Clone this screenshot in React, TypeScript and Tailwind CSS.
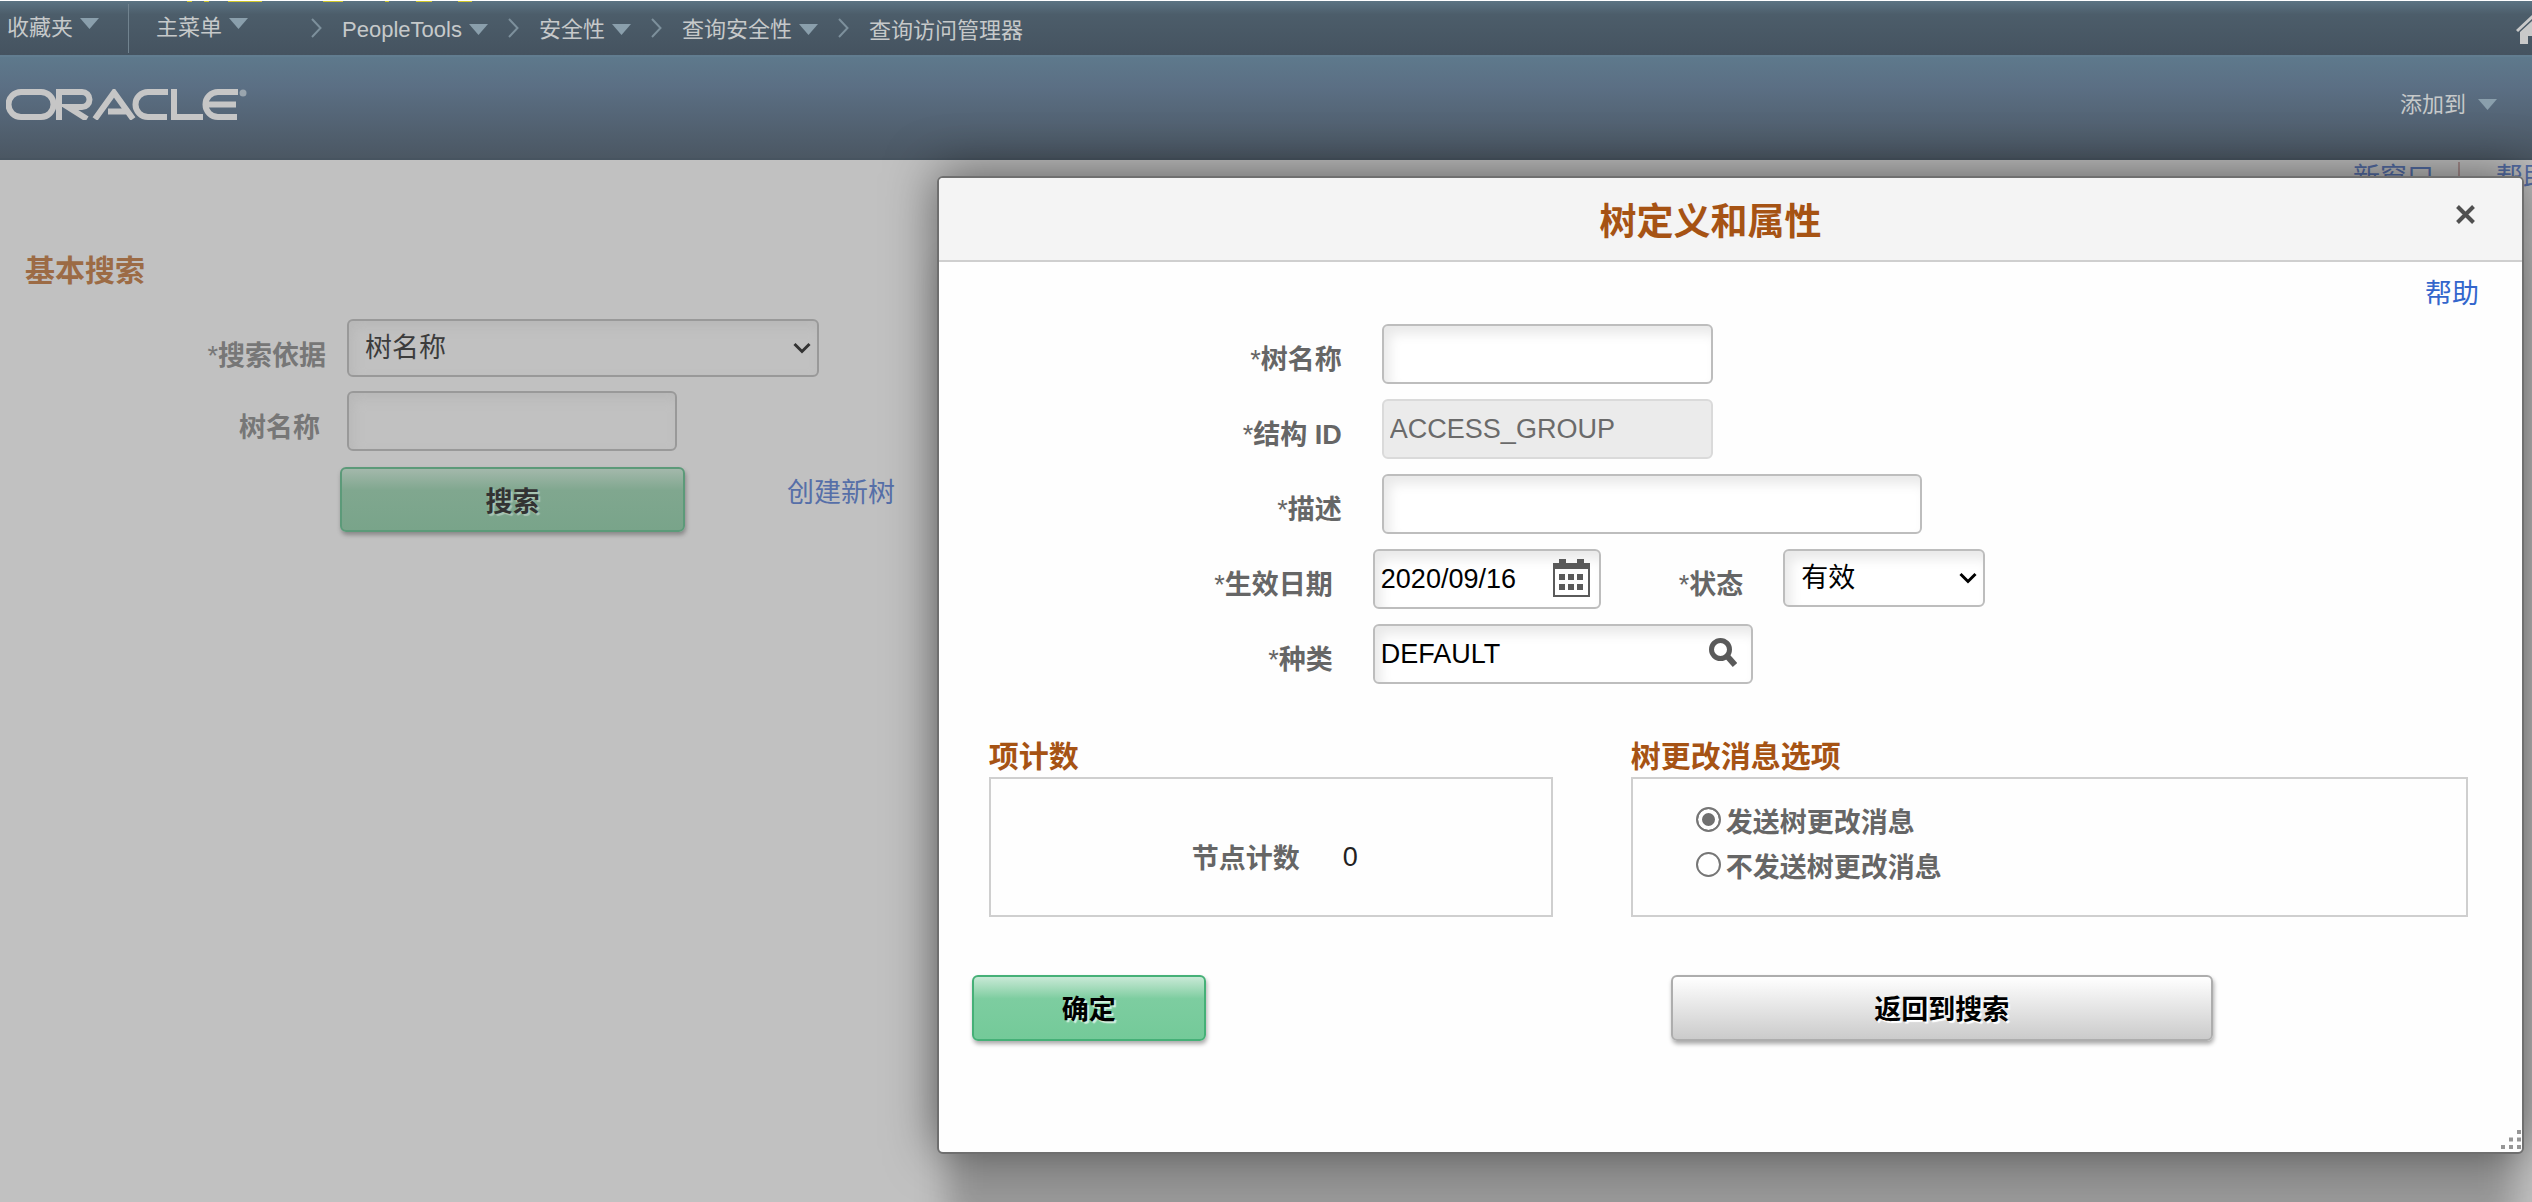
import type { ReactNode } from "react";

const FIELD =
  "h-[60px] rounded-md border-2 border-[#bdbdbd] bg-white px-1.5 text-[27px] text-black shadow-[inset_6px_8px_12px_#e9e9e9] outline-none";

function Caret() {
  return (
    <svg width="19" height="11" viewBox="0 0 19 11" fill="#8a9fac" aria-hidden="true">
      <path d="M0 0H19L9.500 11Z" />
    </svg>
  );
}

function Separator() {
  return (
    <svg width="11" height="20" viewBox="0 0 11 20" fill="none" stroke="#7d909c" strokeWidth="2" aria-hidden="true">
      <path d="M1 1L9.500 10L1 19" />
    </svg>
  );
}

function Crumb({ children }: { children: ReactNode }) {
  return (
    <button type="button" className="flex items-center gap-[7px] pt-1 pb-0.5">
      <span>{children}</span>
      <Caret />
    </button>
  );
}

function Logo() {
  return (
    <svg width="242" height="31" viewBox="0 0 242 31" fill="none" stroke="#c6c6c6" strokeWidth="6" role="img" aria-label="ORACLE">
      <path d="M15 3H35A12.500 12.500 0 0 1 35 28H15A12.500 12.500 0 0 1 15 3Z" />
      <path d="M53 31V3H76A7.500 7.500 0 0 1 76 18H62L81 30" />
      <path d="M89 30L108 3.500L127 30M102 22.500H120" />
      <path d="M162 3H142A12.500 12.500 0 0 0 142 28H161" />
      <path d="M168 0V28H197" />
      <path d="M232 3H212A12.500 12.500 0 0 0 212 28H231M202 15.500H230" />
      <circle cx="237" cy="4" r="3.500" fill="#9aa5ae" stroke="none" />
    </svg>
  );
}

function HomeIcon() {
  return (
    <svg width="32" height="30" viewBox="0 0 32 30" fill="#c9c9c9" aria-hidden="true">
      <path d="M16 0L0 15L2 17L16 4L30 17L32 15Z" />
      <path d="M16 6L4 17V29H12V21H20V29H28V17Z" />
    </svg>
  );
}

function CalendarIcon() {
  return (
    <svg width="38" height="40" viewBox="0 0 38 40" fill="#5a5a5a" aria-hidden="true">
      <path d="M6 0H13V4H24V0H31V4H37V38H0V4H6ZM2 10V36H35V10Z" fillRule="evenodd" />
      <path d="M6 15H12V21H6ZM15 15H21V21H15ZM24 15H30V21H24ZM6 25H12V31H6ZM15 25H21V31H15ZM24 25H30V31H24Z" />
    </svg>
  );
}

function SearchIcon() {
  return (
    <svg width="28" height="29" viewBox="0 0 28 29" fill="none" stroke="#5a5a5a" aria-hidden="true">
      <circle cx="11.500" cy="11.500" r="9" strokeWidth="5" />
      <path d="M18 18L26 27" strokeWidth="6" />
    </svg>
  );
}

function SelectArrow({ color }: { color: string }) {
  return (
    <svg
      className="pointer-events-none absolute top-1/2 right-2 -translate-y-1/2"
      width="18"
      height="12"
      viewBox="0 0 18 12"
      fill="none"
      stroke={color}
      strokeWidth="3"
      aria-hidden="true"
    >
      <path d="M1.500 2L9 9.500L16.500 2" />
    </svg>
  );
}

function FormLabel({ id, narrow, children }: { id: string; narrow?: boolean; children: ReactNode }) {
  return (
    <label
      htmlFor={id}
      className={`shrink-0 pt-3 text-right font-bold text-[#666] ${narrow ? "w-[394px]" : "w-[403px]"}`}
    >
      <span className="font-normal">*</span>
      {children}
    </label>
  );
}

function TopBar() {
  return (
    <nav className="relative flex h-[55px] items-center border-t border-white bg-linear-to-b from-[#5c7483] via-[#4c5d6a] via-25% to-[#455360] pl-[7px] text-[22px] text-[#c6c9ca]">
      <svg className="absolute top-0 left-0" width="500" height="1" viewBox="0 0 500 1" fill="#cfc62a" aria-hidden="true">
        <path d="M187 0h5v1h-5zM204 0h5v1h-5zM228 0h34v1h-34zM323 0h20v1h-20zM385 0h4v1h-4zM416 0h16v1h-16zM458 0h14v1h-14z" />
      </svg>
      <button type="button" className="flex items-center gap-[7px] pb-0.5">
        <span>收藏夹</span>
        <span className="pb-2"><Caret /></span>
      </button>
      <span className="ml-[29px] h-[49px] w-px bg-[#71838f]" />
      <button type="button" className="ml-[27px] flex items-center gap-[7px] pb-0.5">
        <span>主菜单</span>
        <span className="pb-2"><Caret /></span>
      </button>
      <div className="ml-[63px] flex items-center gap-5">
        <Separator />
        <Crumb>PeopleTools</Crumb>
        <Separator />
        <Crumb>安全性</Crumb>
        <Separator />
        <Crumb>查询安全性</Crumb>
        <Separator />
        <span className="pt-1">查询访问管理器</span>
      </div>
      <a href="#home" aria-label="主页" className="-mr-4 ml-auto pt-1">
        <HomeIcon />
      </a>
    </nav>
  );
}

function SearchPanel() {
  return (
    <main className="pl-[25px] text-[27px] leading-10">
      <h1 className="mt-[60px] text-[30px] font-bold text-[#9c6b45]">基本搜索</h1>
      <div className="mt-7 flex items-center">
        <label htmlFor="searchBy" className="w-[301px] pt-4 text-right font-bold text-[#777]">
          <span className="font-normal">*</span>搜索依据
        </label>
        <div className="relative ml-[21px] w-[472px]">
          <select
            id="searchBy"
            className="h-[58px] w-full appearance-none rounded-md border-2 border-[#999] bg-[#c1c1c1] px-4 text-[#3c3c3c] shadow-[inset_4px_6px_12px_#b8b8b8] outline-none"
          >
            <option>树名称</option>
          </select>
          <SelectArrow color="#333" />
        </div>
      </div>
      <div className="mt-3.5 flex items-center">
        <label htmlFor="searchTree" className="w-[295px] pt-3.5 text-right font-bold text-[#777]">
          树名称
        </label>
        <input
          id="searchTree"
          className="ml-[27px] h-[60px] w-[330px] rounded-md border-2 border-[#999] bg-[#c1c1c1] px-1.5 shadow-[inset_4px_6px_12px_#b8b8b8] outline-none"
        />
      </div>
      <div className="mt-4 ml-[315px] flex items-start">
        <button
          type="button"
          className="h-[65px] w-[345px] rounded-md border-2 border-[#5c9a79] bg-linear-to-b from-[#a3b8ab] via-[#80a78f] via-35% to-[#79a48a] pt-1 font-bold text-[#333] shadow-[1px_3px_4px_#888] text-shadow-[2px_2px_1px_#a9c4b4]"
        >
          搜索
        </button>
        <a href="#create" className="mt-1.5 ml-[102px] text-[#566fa8]">
          创建新树
        </a>
      </div>
    </main>
  );
}

function TreeDialog() {
  return (
    <section
      role="dialog"
      aria-labelledby="dialogTitle"
      className="absolute top-44 right-2 left-[37%] rounded-md border-2 border-[#6f6f6f] bg-[#fefefe] text-[27px] leading-10 shadow-[0_-4px_50px_rgba(0,0,0,0.5),0_80px_30px_-10px_rgba(0,0,0,0.22)]"
    >
      <header className="relative flex h-[84px] items-center justify-center rounded-t border-b-2 border-[#cfcfcf] bg-[#f4f4f4] pr-10">
        <h2 id="dialogTitle" className="pt-2 text-[37px] font-bold text-[#a65314]">
          树定义和属性
        </h2>
        <button type="button" aria-label="关闭" className="absolute top-[27px] right-[47px]">
          <svg width="19" height="19" viewBox="0 0 19 19" fill="none" stroke="#505050" strokeWidth="4" aria-hidden="true">
            <path d="M1.500 1.500L17.500 17.500M17.500 1.500L1.500 17.500" />
          </svg>
        </button>
      </header>

      <div className="flex justify-end pt-3 pr-[43px]">
        <a href="#help" className="text-[#3366cc]">
          帮助
        </a>
      </div>

      <form className="mt-2.5 flex flex-col">
        <div className="flex flex-col gap-[15px]">
          <div className="flex items-center gap-10">
            <FormLabel id="treeName">树名称</FormLabel>
            <input id="treeName" className={`w-[331px] ${FIELD}`} />
          </div>
          <div className="flex items-center gap-10">
            <FormLabel id="structureId">结构 ID</FormLabel>
            <input
              id="structureId"
              disabled
              defaultValue="ACCESS_GROUP"
              className="h-[60px] w-[331px] rounded-md border-2 border-[#dadada] bg-[#ebebeb] px-1.5 text-[27px] text-[#6a6a6a]"
            />
          </div>
          <div className="flex items-center gap-10">
            <FormLabel id="description">描述</FormLabel>
            <input id="description" className={`w-[540px] ${FIELD}`} />
          </div>
          <div className="flex items-center gap-10">
            <FormLabel id="effectiveDate" narrow>生效日期</FormLabel>
            <div className="relative">
              <input id="effectiveDate" defaultValue="2020/09/16" className={`w-[228px] ${FIELD}`} />
              <button type="button" aria-label="选择日期" className="absolute top-2.5 right-2.5">
                <CalendarIcon />
              </button>
            </div>
            <label htmlFor="status" className="ml-[38px] pt-3 font-bold text-[#666]">
              <span className="font-normal">*</span>状态
            </label>
            <div className="relative self-start">
              <select
                id="status"
                className="block h-[58px] w-[202px] appearance-none rounded-md border-2 border-[#bdbdbd] bg-white px-4 text-[27px] text-black shadow-[inset_6px_8px_12px_#e9e9e9] outline-none"
              >
                <option>有效</option>
              </select>
              <SelectArrow color="#000" />
            </div>
          </div>
          <div className="flex items-center gap-10">
            <FormLabel id="category" narrow>种类</FormLabel>
            <div className="relative">
              <input id="category" defaultValue="DEFAULT" className={`w-[380px] ${FIELD}`} />
              <button type="button" aria-label="查找" className="absolute top-3.5 right-4">
                <SearchIcon />
              </button>
            </div>
          </div>
        </div>

        <div className="mt-[53px] flex gap-[78px] pr-[54px] pl-[50px]">
          <section className="w-[564px]">
            <h3 className="text-[30px] font-bold text-[#a65314]">项计数</h3>
            <div className="flex h-[140px] items-center gap-[43px] border-2 border-[#cfcfcf] pt-5 pl-[201px]">
              <span className="pt-1 font-bold text-[#666]">节点计数</span>
              <span className="text-[#222]">0</span>
            </div>
          </section>
          <section className="flex-1">
            <h3 className="text-[30px] font-bold text-[#a65314]">树更改消息选项</h3>
            <div className="flex h-[140px] flex-col gap-px border-2 border-[#cfcfcf] pt-5 pl-[63px] font-bold text-[#666]">
              <label className="flex items-center gap-[5px]">
                <input type="radio" name="message" defaultChecked className="mb-1 size-[25px] appearance-none rounded-full border-2 border-[#767676] bg-[#707070] shadow-[inset_0_0_0_4px_#fff]" />
                <span className="pt-1">发送树更改消息</span>
              </label>
              <label className="flex items-center gap-[5px]">
                <input type="radio" name="message" className="mb-1 size-[25px] appearance-none rounded-full border-2 border-[#767676] bg-white" />
                <span className="pt-1">不发送树更改消息</span>
              </label>
            </div>
          </section>
        </div>

        <div className="mt-[58px] mb-[111px] flex gap-[465px] pl-[33px]">
          <button
            type="button"
            className="h-[66px] w-[234px] rounded-md border-2 border-[#45b077] bg-linear-to-b from-[#c8e9d6] via-[#7dcda0] via-35% to-[#74ca99] pt-1 font-bold text-black shadow-[1px_3px_4px_#aaa] text-shadow-[2px_2px_1px_#d4efdf]"
          >
            确定
          </button>
          <button
            type="button"
            className="h-[66px] w-[542px] rounded-md border-2 border-[#adadad] bg-linear-to-b from-white to-[#cbcbcb] pt-1 font-bold text-black shadow-[1px_3px_4px_#aaa] text-shadow-[2px_2px_1px_#fff]"
          >
            返回到搜索
          </button>
        </div>
      </form>

      <svg className="absolute right-0 bottom-0.5" width="21" height="20" viewBox="0 0 21 20" fill="#969696" aria-hidden="true">
        <path d="M16 0h4v4h-4zM8 7.500h4v4h-4zM16 7.500h4v4h-4zM0 15h4v4h-4zM8 15h4v4h-4zM16 15h4v4h-4z" />
      </svg>
    </section>
  );
}

export default function App() {
  return (
    <div className="relative h-screen overflow-hidden bg-[#c1c1c1] font-['Liberation_Sans','Noto_Sans_CJK_SC',sans-serif]">
      <TopBar />
      <header className="flex h-[105px] items-center justify-between border-t-2 border-b-2 border-t-[#627d90] border-b-[#475460] bg-linear-to-b from-[#5e798c] via-[#5b6f84] via-30% to-[#4b5763] pr-[35px] pb-1.5 pl-1.5 text-[22px] text-[#c6c9ca]">
        <Logo />
        <button type="button" className="flex items-center gap-3">
          <span>添加到</span>
          <Caret />
        </button>
      </header>
      <div className="-mr-[18px] flex h-[31px] justify-end gap-6 pt-0.5 text-[27px] leading-8 text-[#566fa8]">
        <a href="#new">新窗口</a>
        <span className="mr-3 w-0.5 bg-[#a89090]" />
        <a href="#help">帮助</a>
      </div>
      <SearchPanel />
      <TreeDialog />
    </div>
  );
}
